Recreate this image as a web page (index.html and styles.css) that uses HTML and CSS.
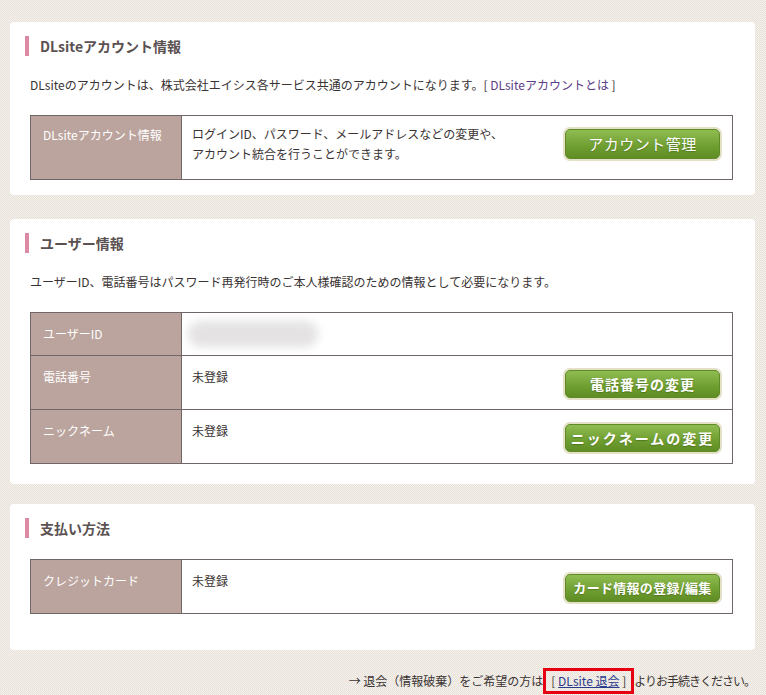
FILE: index.html
```html
<!DOCTYPE html>
<html lang="ja">
<head>
<meta charset="utf-8">
<title>アカウント情報</title>
<link rel="stylesheet" href="styles.css">
</head>
<body>
<div class="page">
  <section class="panel panel--first">
    <h2 class="heading">DLsiteアカウント情報</h2>
    <p class="desc">DLsiteのアカウントは、株式会社エイシス各サービス共通のアカウントになります。[ <a class="link" href="#">DLsiteアカウントとは</a> ]</p>
    <table class="info">
      <tr class="row row--account">
        <th class="label">DLsiteアカウント情報</th>
        <td class="value">
          <div class="cell">
            <span class="text">ログインID、パスワード、メールアドレスなどの変更や、<br>アカウント統合を行うことができます。</span>
            <a class="btn btn--large" href="#">アカウント管理</a>
          </div>
        </td>
      </tr>
    </table>
  </section>

  <section class="panel panel--middle">
    <h2 class="heading">ユーザー情報</h2>
    <p class="desc">ユーザーID、電話番号はパスワード再発行時のご本人様確認のための情報として必要になります。</p>
    <table class="info">
      <tr class="row">
        <th class="label">ユーザーID</th>
        <td class="value value--blur"><div class="blur"></div></td>
      </tr>
      <tr class="row">
        <th class="label">電話番号</th>
        <td class="value">
          <div class="cell">
            <span class="text">未登録</span>
            <a class="btn" href="#">電話番号の変更</a>
          </div>
        </td>
      </tr>
      <tr class="row">
        <th class="label">ニックネーム</th>
        <td class="value">
          <div class="cell">
            <span class="text">未登録</span>
            <a class="btn btn--wide" href="#">ニックネームの変更</a>
          </div>
        </td>
      </tr>
    </table>
  </section>

  <section class="panel panel--last">
    <h2 class="heading">支払い方法</h2>
    <table class="info">
      <tr class="row">
        <th class="label">クレジットカード</th>
        <td class="value">
          <div class="cell">
            <span class="text">未登録</span>
            <a class="btn btn--small" href="#">カード情報の登録/編集</a>
          </div>
        </td>
      </tr>
    </table>
  </section>

  <p class="footer">→ 退会（情報破棄）をご希望の方は<span class="mark">[ <a class="link link--blue" href="#">DLsite 退会</a> ]</span><span class="tail">よりお手続きください。</span></p>
</div>
</body>
</html>
```

FILE: styles.css
```css
html, body {
  margin: 0;
  padding: 0;
}

body {
  font-family: "Noto Sans CJK JP", "Noto Sans", sans-serif;
  font-size: 12px;
  color: #3a3333;
  background-color: #eee9e2;
  background-image: repeating-conic-gradient(#f6f3ee 0 25%, #e7e0d8 0 50%);
  background-size: 2px 2px;
  min-height: 695px;
}

.page {
  padding: 22px 11px 0 10px;
}

.panel {
  background: #ffffff;
  border-radius: 4px;
  padding: 14px 22px 20px 20px;
  margin-bottom: 20px;
}

.panel--first {
  padding-bottom: 15px;
  margin-bottom: 24px;
}

.panel--middle {
  padding-bottom: 20px;
}

.panel--last {
  padding-bottom: 36px;
  margin-bottom: 0;
}

.heading {
  margin: 0 0 0 -5px;
  border-left: 4px solid #dc8aa3;
  padding-left: 11px;
  height: 20px;
  line-height: 20px;
  font-size: 14px;
  font-weight: bold;
  color: #5b5151;
}

.desc {
  margin: 20px 0 0;
  line-height: 18px;
}

.link {
  color: #5c3d87;
  text-decoration: none;
}

.link--blue {
  color: #2b3a8c;
  text-decoration: underline;
}

.info {
  width: 100%;
  margin-top: 21px;
  border-collapse: collapse;
}

.label,
.value {
  border: 1px solid #6f6767;
  vertical-align: top;
  text-align: left;
  line-height: 18px;
}

.label {
  width: 151px;
  padding: 12px 12px 11px 12px;
  box-sizing: border-box;
  background: #bba49d;
  color: #ffffff;
  font-weight: normal;
  font-size: 12px;
}

.value {
  padding: 12px 12px 11px 10px;
  background: #ffffff;
}

.row--account .label {
  padding-top: 10px;
}

.row--account .value {
  padding-top: 8px;
  padding-bottom: 15px;
}

.row--account .text {
  line-height: 20px;
}

.value--blur {
  padding: 0;
  height: 42px;
  overflow: hidden;
}

.blur {
  width: 130px;
  height: 26px;
  margin: 8px 0 0 6px;
  background: #e4e2e2;
  border-radius: 14px;
  filter: blur(5px);
}

.cell {
  display: flex;
  justify-content: space-between;
  align-items: flex-start;
}

.btn {
  display: flex;
  align-items: center;
  justify-content: center;
  box-sizing: border-box;
  width: 155px;
  height: 28px;
  margin-top: 2px;
  border-radius: 5px;
  border: 1px solid #5e8a28;
  box-shadow: 0 0 0 2px #e3e0c6;
  background: linear-gradient(#90bd52, #6e9d30 60%, #5f8d24);
  color: #ffffff;
  font-size: 14px;
  font-weight: bold;
  letter-spacing: 1px;
  text-decoration: none;
  text-shadow: 0 1px 1px rgba(40, 60, 10, 0.35);
}

.btn--large {
  height: 30px;
  margin-top: 5px;
  font-size: 15px;
  font-weight: normal;
  letter-spacing: 0.5px;
}

.btn--wide {
  letter-spacing: 2px;
}

.btn--small {
  font-size: 13px;
  letter-spacing: 0.3px;
}

.footer {
  margin: 22px 0 0 0;
  text-align: right;
  line-height: 18px;
}

.mark {
  display: inline-block;
  border: 3px solid #e60012;
  padding: 1px 5px;
  margin: -4px 0;
  line-height: 18px;
}

.tail {
  letter-spacing: -1px;
}
```
